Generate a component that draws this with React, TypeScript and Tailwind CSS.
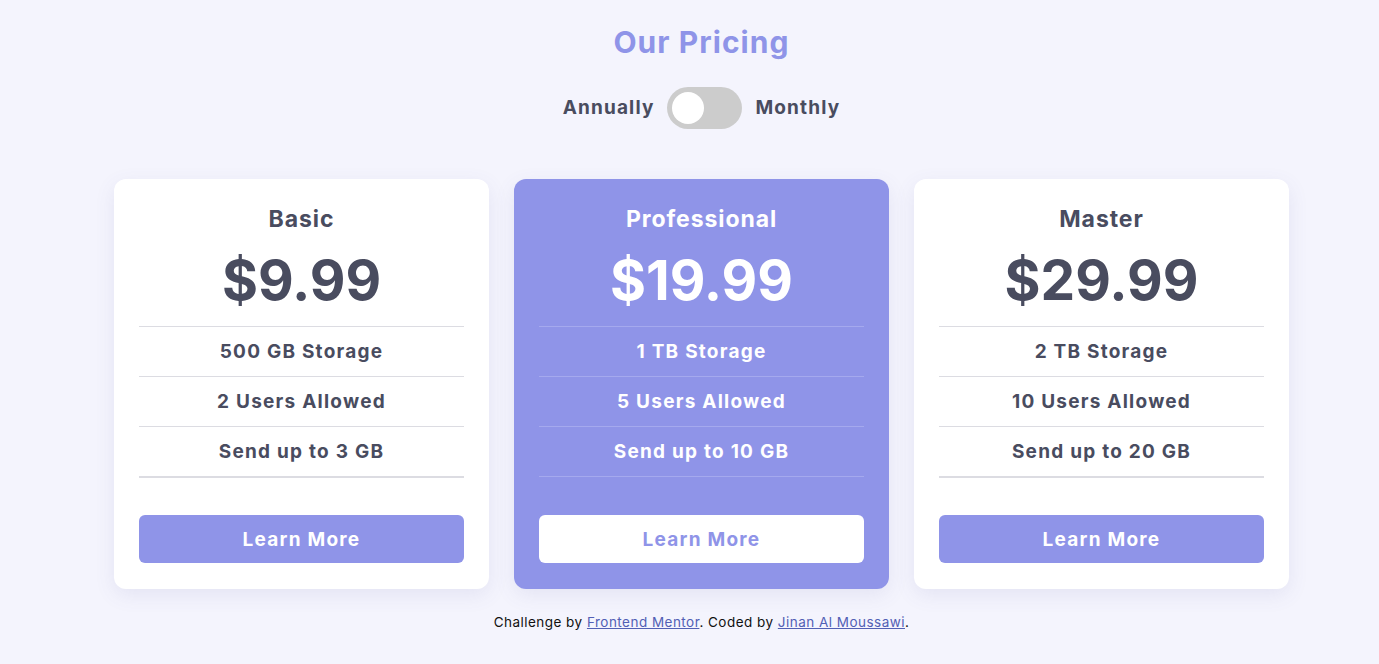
import { useState } from "react";

const plans = [
  { name: "Basic", price: "$9.99", features: ["500 GB Storage", "2 Users Allowed", "Send up to 3 GB"], featured: false },
  { name: "Professional", price: "$19.99", features: ["1 TB Storage", "5 Users Allowed", "Send up to 10 GB"], featured: true },
  { name: "Master", price: "$29.99", features: ["2 TB Storage", "10 Users Allowed", "Send up to 20 GB"], featured: false },
];

export default function App() {
  const [monthly, setMonthly] = useState(false);

  return (
    <div
      className="min-h-[664px] w-full bg-[#f4f4fd] pt-[24px] pl-[24px] text-[#494c5f]"
      style={{ fontFamily: "Inter, 'Noto Sans', sans-serif" }}
    >
      <h1 className="text-center text-[30px] leading-[36px] font-bold tracking-[0.035em] text-[#8f94e8]">Our Pricing</h1>

      <div className="mt-[27px] flex items-center justify-center gap-[13px] text-[19px] font-bold tracking-[0.06em]">
        <span>Annually</span>
        <button
          onClick={() => setMonthly(!monthly)}
          className="flex h-[42px] w-[75px] items-center rounded-full bg-[#cccccc] px-[5px]"
        >
          <span className={"block h-[32px] w-[32px] rounded-full bg-white " + (monthly ? "ml-auto" : "")} />
        </button>
        <span>Monthly</span>
      </div>

      <div className="mt-[50px] flex justify-center gap-[25px]">
        {plans.map((p) => (
          <div
            key={p.name}
            className={
              "flex w-[375px] flex-col rounded-[12px] px-[25px] pt-[26px] pb-[26px] text-center shadow-[0_6px_20px_rgba(90,90,160,0.10)] " +
              (p.featured ? "bg-[#8f94e8] text-white" : "bg-white text-[#494c5f]")
            }
          >
            <h2 className="text-[23px] leading-[29px] font-bold tracking-[0.04em]">{p.name}</h2>
            <div className="mt-[18px] mb-[18px] text-[55px] leading-[56px] font-bold">{p.price}</div>
            <ul>
              {p.features.map((f, i) => {
                const last = i === p.features.length - 1;
                return (
                  <li
                    key={f}
                    className={
                      "flex items-center justify-center border-t pt-[1px] text-[19px] font-bold tracking-[0.065em] " +
                      (p.featured ? "border-[#a5a9ee]" : "border-[#dcdce2]") +
                      (last ? (p.featured ? " h-[51px] border-b" : " h-[52px] border-b-2") : " h-[50px]")
                    }
                  >
                    {f}
                  </li>
                );
              })}
            </ul>
            <button
              className={
                "h-[48px] rounded-[6px] pt-[3px] text-[19px] font-bold tracking-[0.065em] " +
                (p.featured ? "mt-[38px] bg-white text-[#8f94e8]" : "mt-[37px] bg-[#8f94e8] text-white")
              }
            >
              Learn More
            </button>
          </div>
        ))}
      </div>

      <p className="mt-[23px] text-center text-[13.5px] tracking-[0.035em] text-[#111]">
        Challenge by{" "}
        <a href="#" className="text-[#5260b5] underline">
          Frontend Mentor
        </a>
        . Coded by{" "}
        <a href="#" className="text-[#5260b5] underline">
          Jinan Al Moussawi
        </a>
        .
      </p>
    </div>
  );
}
